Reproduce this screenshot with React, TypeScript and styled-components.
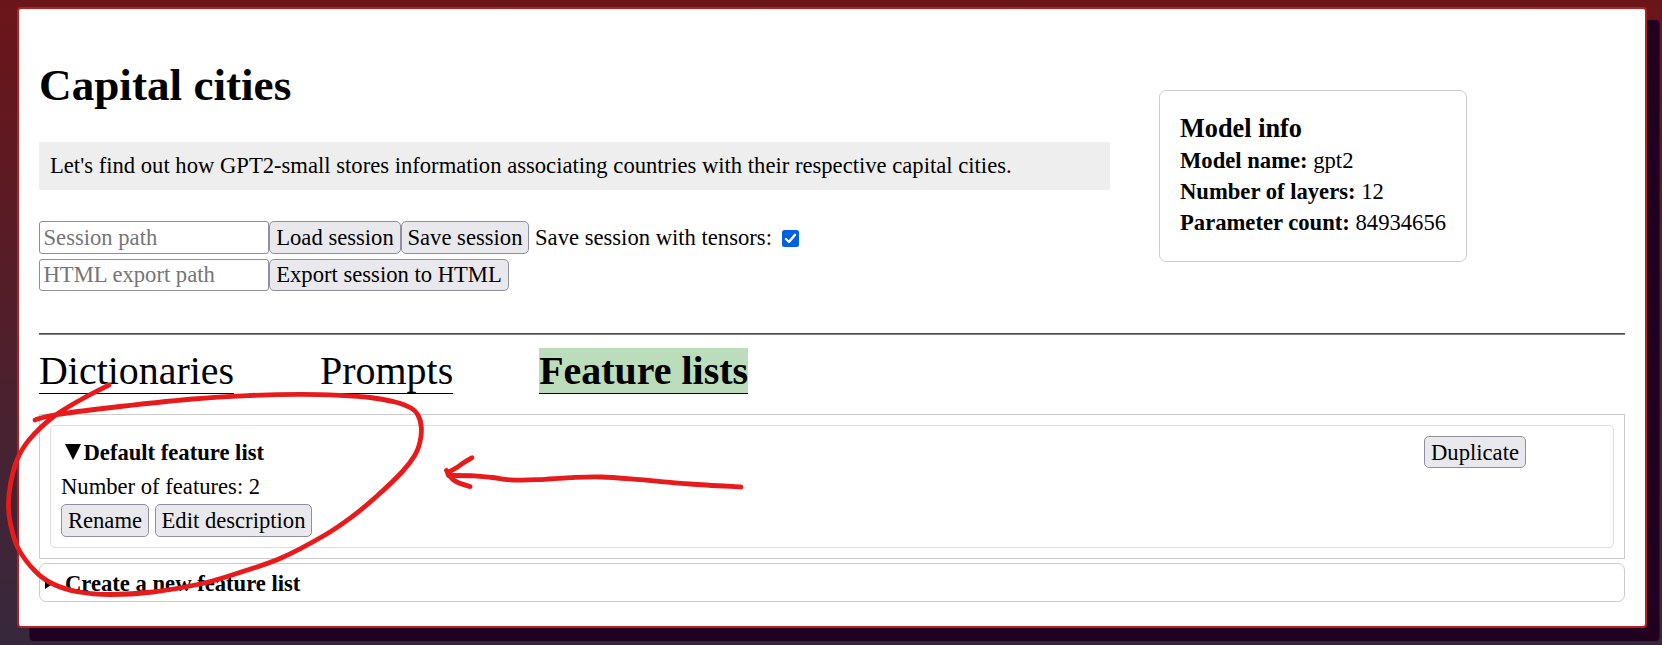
import React from 'react';
import styled, { createGlobalStyle } from 'styled-components';

const GlobalStyle = createGlobalStyle`
  * { box-sizing: border-box; }
  html, body { margin: 0; height: 100%; overflow: hidden; }
  body {
    font-family: "Liberation Serif", "Times New Roman", serif;
    font-size: 22.63px;
    line-height: 26px;
    color: #000;
  }
`;

const Page = styled.div`
  position: relative;
  height: 645px;
  padding: 7px 15px 0 17px;
  background: linear-gradient(#6b1519, #36283c);
`;

const Panel = styled.main`
  height: 621px;
  padding: 0 20px;
  background: #fff;
  border: 2px solid #b22222;
  border-radius: 4px;
  box-shadow: 12.5px 13px 0 #200020;
`;

const Header = styled.header`
  display: flex;
  align-items: flex-start;
  height: 324px;
`;

const Intro = styled.section`
  width: 1071px;
`;

const Title = styled.h1`
  margin: 50px 0 31px;
  font-size: 45.2px;
  line-height: 52px;
`;

const Description = styled.p`
  margin: 0 0 31px;
  height: 48px;
  padding: 11px;
  background: #eee;
`;

const FormRow = styled.div<{ $height: number }>`
  display: flex;
  align-items: center;
  height: ${(p) => p.$height}px;
  margin-bottom: 5px;
`;

const PathInput = styled.input`
  width: 230px;
  height: 100%;
  padding: 0 4px 0 3.5px;
  font: inherit;
  background: #fff;
  border: 1px solid #8f8f9d;
  border-radius: 3px;
  &::placeholder { color: #757575; }
`;

const Button = styled.button<{ $width: number; $height?: number; $drop?: number }>`
  flex: none;
  width: ${(p) => p.$width}px;
  height: ${(p) => p.$height ?? 33}px;
  padding: ${(p) => p.$drop ?? 0}px 0 0;
  font: inherit;
  line-height: 30px;
  white-space: nowrap;
  color: #000;
  background: #e9e9ed;
  border: 1px solid #8f8f9d;
  border-radius: 5px;
`;

const CheckLabel = styled.label`
  display: flex;
  align-items: center;
  gap: 10px;
  margin-left: 6px;
`;

const CheckMark = styled.svg`
  width: 17px;
  height: 17px;
  margin-top: 2px;
`;

const ModelInfo = styled.aside`
  width: 308px;
  height: 172px;
  margin: 81px 0 0 49px;
  padding: 22px 20px;
  border: 1px solid #ccc;
  border-radius: 7px;
  line-height: 31px;
  white-space: nowrap;
`;

const ModelHeading = styled.h3`
  margin: 0;
  font-size: 26.3px;
  line-height: 32px;
`;

const Divider = styled.hr`
  height: 2px;
  margin: 0;
  border: 0;
  border-top: 1px solid #4d4d4d;
  background: #808080;
`;

const Tabs = styled.nav`
  display: flex;
  gap: 86px;
  margin: 13px 0 20px;
`;

const Tab = styled.span<{ $active?: boolean }>`
  height: 46px;
  font-size: 39.93px;
  line-height: 46px;
  border-bottom: 1px solid #000;
  font-weight: ${(p) => (p.$active ? 700 : 400)};
  background: ${(p) => (p.$active ? '#bbddbb' : 'transparent')};
`;

const ListFrame = styled.section`
  height: 145px;
  padding: 10px;
  border: 1px solid #ccc;
`;

const ListCard = styled.article`
  height: 123px;
  padding: 10px;
  border: 1px solid #ddd;
  border-radius: 5px;
`;

const CardHeader = styled.div`
  display: flex;
  justify-content: space-between;
  align-items: flex-start;
  height: 33px;
  padding-right: 77px;
`;

const CardTitle = styled.div`
  display: flex;
  align-items: center;
  gap: 3px;
  padding-left: 3.5px;
  line-height: 33px;
  font-weight: 700;
`;

const Caret = styled.svg`
  width: 16px;
  height: 16px;
  margin-bottom: 1px;
`;

const FeatureCount = styled.div`
  height: 35px;
  line-height: 36px;
`;

const Actions = styled.div`
  display: flex;
  gap: 6px;
`;

const NewList = styled.section`
  display: flex;
  align-items: center;
  gap: 11px;
  height: 39px;
  margin-top: 4px;
  padding: 2px 0 0 5px;
  border: 1px solid #ccc;
  border-radius: 7px;
  font-weight: 700;
`;

const SmallCaret = styled.svg`
  width: 9px;
  height: 12px;
  margin-bottom: 1px;
`;

const Ink = styled.svg`
  position: absolute;
  inset: 0;
  pointer-events: none;
`;

type Point = [number, number];

const loop: Point[] = [
  [109, 385], [82, 399], [53, 417], [29, 440], [17, 460], [10.5, 484], [8.5, 505],
  [10.5, 524], [18, 548], [35, 571], [53, 584], [79, 592], [111, 594.5], [153, 592],
  [200, 584], [232, 575], [280, 558.5], [325, 535], [353, 516], [377, 496],
  [402, 472], [415, 455], [420, 442], [421.3, 427], [418, 415], [411, 408],
  [395, 402], [370, 397.5], [340, 395.3], [300, 394.3],
  [250, 395.5], [193, 399], [107, 408], [54, 415], [35, 420],
];
const shaft: Point[] = [
  [741, 487], [690, 484], [640, 479.7], [601, 477], [570, 477.7], [538, 479.7],
  [510, 479.8], [492, 477.5], [474, 475.8], [449, 475.5],
];
const tip: Point[] = [[449, 475.5], [446.5, 470.5]];
const barbUp: Point[] = [[472, 457.7], [464, 462.5], [456, 468], [448, 472.5]];
const barbDown: Point[] = [[470, 486.5], [459, 483], [453, 479.5], [448, 474.5]];

// Catmull-Rom spline through the given points, as cubic segments.
const smooth = (pts: Point[]) =>
  pts.slice(1).reduce((d, p, i) => {
    const a = pts[i];
    const before = pts[i - 1] ?? a;
    const after = pts[i + 2] ?? p;
    const c1 = [a[0] + (p[0] - before[0]) / 6, a[1] + (p[1] - before[1]) / 6];
    const c2 = [p[0] - (after[0] - a[0]) / 6, p[1] - (after[1] - a[1]) / 6];
    return `${d} C${c1} ${c2} ${p}`;
  }, `M${pts[0]}`);

export default function App() {
  return (
    <Page>
      <GlobalStyle />
      <Panel>
        <Header>
          <Intro>
            <Title>Capital cities</Title>
            <Description>
              Let's find out how GPT2-small stores information associating countries with their respective capital cities.
            </Description>
            <FormRow $height={33}>
              <PathInput placeholder="Session path" />
              <Button $width={132}>Load session</Button>
              <Button $width={128}>Save session</Button>
              <CheckLabel>
                Save session with tensors:
                <CheckMark viewBox="0 0 17 17">
                  <rect width="17" height="17" rx="2.5" fill="#0060df" />
                  <path d="M4 9 L7 12 L13 4.8" fill="none" stroke="#fff" strokeWidth="2.4" strokeLinecap="round" strokeLinejoin="round" />
                </CheckMark>
              </CheckLabel>
            </FormRow>
            <FormRow $height={32}>
              <PathInput placeholder="HTML export path" />
              <Button $width={240} $height={32}>Export session to HTML</Button>
            </FormRow>
          </Intro>
          <ModelInfo>
            <ModelHeading>Model info</ModelHeading>
            <div><b>Model name:</b> gpt2</div>
            <div><b>Number of layers:</b> 12</div>
            <div><b>Parameter count:</b> 84934656</div>
          </ModelInfo>
        </Header>
        <Divider />
        <Tabs>
          <Tab>Dictionaries</Tab>
          <Tab>Prompts</Tab>
          <Tab $active>Feature lists</Tab>
        </Tabs>
        <ListFrame>
          <ListCard>
            <CardHeader>
              <CardTitle>
                <Caret viewBox="0 0 16 16"><path d="M0 0H16L8 16Z" /></Caret>
                Default feature list
              </CardTitle>
              <Button $width={102} $height={32} $drop={1}>Duplicate</Button>
            </CardHeader>
            <FeatureCount>Number of features: 2</FeatureCount>
            <Actions>
              <Button $width={88}>Rename</Button>
              <Button $width={157}>Edit description</Button>
            </Actions>
          </ListCard>
        </ListFrame>
        <NewList>
          <SmallCaret viewBox="0 0 9 12"><path d="M0 0V12L9 6Z" /></SmallCaret>
          Create a new feature list
        </NewList>
      </Panel>
      <Ink width="1662" height="645" viewBox="0 0 1662 645">
        <g fill="none" stroke="#e81b1c" strokeWidth="4.8" strokeLinecap="round" strokeLinejoin="round">
          <path d={smooth(loop)} />
          <path d={smooth(shaft)} />
          <path d={smooth(tip)} />
          <path d={smooth(barbUp)} />
          <path d={smooth(barbDown)} />
        </g>
      </Ink>
    </Page>
  );
}
